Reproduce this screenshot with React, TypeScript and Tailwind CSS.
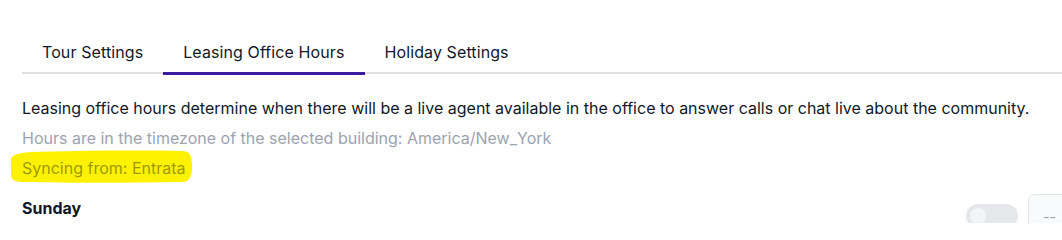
import React from "react";

const tabs = ["Tour Settings", "Leasing Office Hours", "Holiday Settings"];

export default function App() {
  return (
    <div
      className="w-[1062px] h-[223px] overflow-hidden bg-white text-[#111827]"
      style={{ fontFamily: 'Inter, "Liberation Sans", sans-serif' }}
    >
      <div className="w-[1200px] pl-[22px] pt-[28px]">
        <div className="flex border-b-2 border-[#dfe1e5]">
          {tabs.map((t, i) => (
            <div
              key={t}
              className={
                i === 1
                  ? "px-5 pt-3 pb-2 -mb-[3px] border-b-[3px] border-[#3a1c9e] text-base leading-6 tracking-[0.1px]"
                  : "px-5 pt-3 pb-2 -mb-[3px] border-b-[3px] border-transparent text-base leading-6 tracking-[0.1px]"
              }
            >
              {t}
            </div>
          ))}
        </div>
        <div className="pt-[21.5px]">
          <p className="text-base leading-[30px] -mt-[3px] text-[#111827]">
            Leasing office hours determine when there will be a live agent available in the office to answer calls or chat live about the community.
          </p>
          <p className="text-base leading-[30px] text-[#9ca3af]">
            Hours are in the timezone of the selected building: America/New_York
          </p>
          <div className="relative w-fit text-base leading-[30px]">
            <svg
              className="absolute -left-[12px] top-[-3px]"
              width="184"
              height="34"
              viewBox="0 0 184 34"
            >
              <path
                d="M1 8 C4 4 10 3 20 2 C60 1 120 0 172 1 C180 1 182 6 182 16 C182 26 180 32 172 32 C120 33 60 33 14 32 C4 32 1 30 1 24 Z"
                fill="#fff200"
              />
            </svg>
            <span className="relative text-[#9c9b00]">Syncing from: Entrata</span>
          </div>
          <div className="mt-[11.5px] flex items-start w-[1138px]">
            <div className="flex-1 text-base leading-6 font-bold pt-[1.5px] text-[#111827]">Sunday</div>
            <div className="mt-[10px] w-[52px] h-6 rounded-full bg-[#e5e7eb] flex items-center px-1">
              <div className="w-4 h-4 rounded-full bg-[#f3f4f6]" />
            </div>
            <div className="ml-[10px] w-[132px] h-10 rounded-md border border-[#e5e7eb] bg-[#f9fafb] flex items-center pl-[14px] pt-[6px] text-[#9ca3af] text-sm">
              --
            </div>
          </div>
        </div>
      </div>
    </div>
  );
}
